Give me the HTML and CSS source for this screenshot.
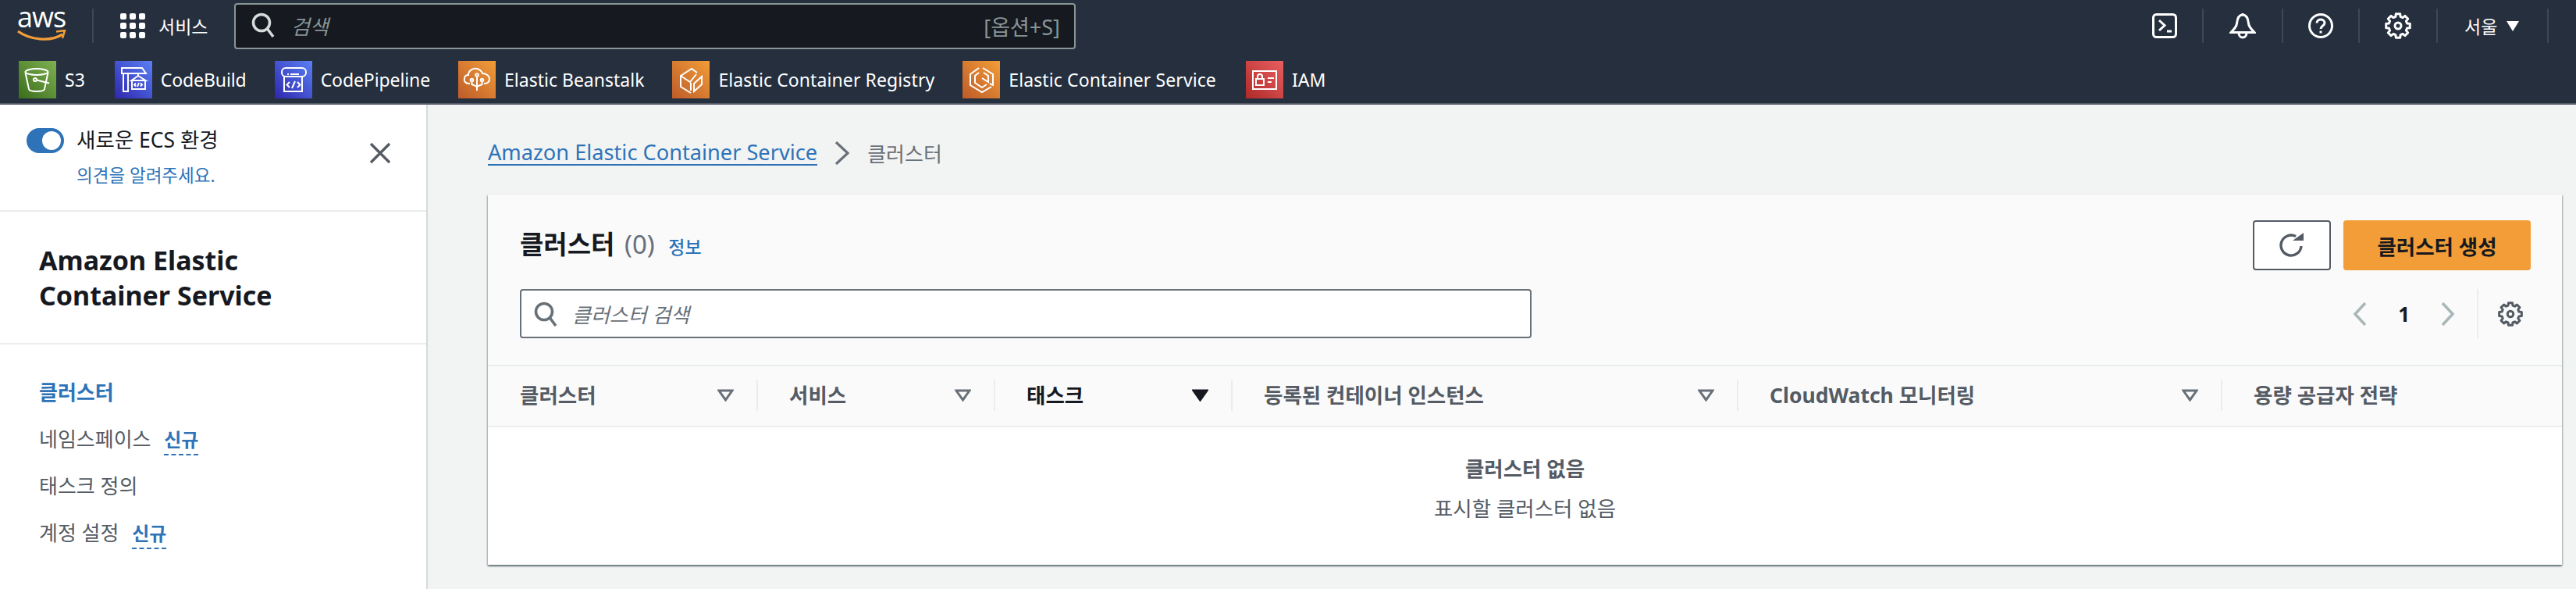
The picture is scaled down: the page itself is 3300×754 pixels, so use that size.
FILE: index.html
```html
<!DOCTYPE html>
<html lang="ko">
<head>
    <meta charset="UTF-8">
    <meta name="viewport" content="width=device-width, initial-scale=1.0">
    <title>클러스터 | Amazon Elastic Container Service</title>
    <link rel="stylesheet" href="styles.css">
</head>
<body>

    <header class="top_nav">
        <div class="nav_row">
            <a class="aws_logo">
                <span class="aws_text">aws</span>
                <svg class="aws_smile" width="64" height="16" viewBox="0 0 64 16" fill="none">
                    <path d="M1 2 C16 13 42 16 58 6" stroke="#f29d38" stroke-width="3.4"/>
                    <path d="M50 2.5 L61 1 L58 11" stroke="#f29d38" stroke-width="2.6"/>
                </svg>
            </a>
            <span class="nav_divider"></span>
            <a class="services_btn">
                <svg width="32" height="32" viewBox="0 0 32 32" fill="#fff">
                    <rect x="0" y="0" width="8" height="8" rx="2"/><rect x="12" y="0" width="8" height="8" rx="2"/><rect x="24" y="0" width="8" height="8" rx="2"/>
                    <rect x="0" y="12" width="8" height="8" rx="2"/><rect x="12" y="12" width="8" height="8" rx="2"/><rect x="24" y="12" width="8" height="8" rx="2"/>
                    <rect x="0" y="24" width="8" height="8" rx="2"/><rect x="12" y="24" width="8" height="8" rx="2"/><rect x="24" y="24" width="8" height="8" rx="2"/>
                </svg>
                <span>서비스</span>
            </a>
            <div class="nav_search">
                <svg width="30" height="34" viewBox="0 0 30 34" fill="none" stroke="#d5dbdb" stroke-width="3.6">
                    <circle cx="13" cy="13" r="10.5"/>
                    <path d="M20.5 21 L28 31"/>
                </svg>
                <span class="nav_search_text">검색</span>
                <span class="nav_search_key">[옵션+S]</span>
            </div>
            <div class="nav_tools">
                <span class="tool tool_first">
                    <svg width="32" height="32" viewBox="0 0 32 32" fill="none" stroke="#fff" stroke-width="3">
                        <rect x="1.5" y="1.5" width="29" height="29" rx="4"/>
                        <path d="M9 9 L16 15.5 L9 22"/>
                        <path d="M19 23 H25"/>
                    </svg>
                </span>
                <span class="tool tool_bell">
                    <svg width="34" height="34" viewBox="0 0 34 34" fill="none" stroke="#fff" stroke-width="3">
                        <path d="M17 3 C11 3 10 9 9.5 14 C9 19 5 22 2 25.5 H32 C29 22 25 19 24.5 14 C24 9 23 3 17 3 Z"/>
                        <path d="M12 26 C12 34 22 34 22 26"/>
                        <path d="M17 1 V3"/>
                    </svg>
                </span>
                <span class="tool tool_help">
                    <svg width="32" height="32" viewBox="0 0 32 32" fill="none" stroke="#fff" stroke-width="3">
                        <circle cx="16" cy="16" r="14.5"/>
                        <path d="M11 12.5 C11 6.5 21 6.5 21 12.5 C21 16 16 16 16 20"/>
                        <path d="M16 22.5 V25.5"/>
                    </svg>
                </span>
                <span class="tool">
                    <svg width="34" height="34" viewBox="0 0 34 34" fill="none" stroke="#fff" stroke-width="3" stroke-linejoin="round">
                        <polygon points="19.69,1.74 20.11,5.41 23,6.61 25.89,4.3 29.7,8.11 27.39,11 28.59,13.89 32.26,14.31 32.26,19.69 28.59,20.11 27.39,23 29.7,25.89 25.89,29.7 23,27.39 20.11,28.59 19.69,32.26 14.31,32.26 13.89,28.59 11,27.39 8.11,29.7 4.3,25.89 6.61,23 5.41,20.11 1.74,19.69 1.74,14.31 5.41,13.89 6.61,11 4.3,8.11 8.11,4.3 11,6.61 13.89,5.41 14.31,1.74"/>
                        <circle cx="17" cy="17" r="4"/>
                    </svg>
                </span>
                <span class="tool tool_region">서울 <i class="region_caret"></i></span>
                <span class="tool tool_last"></span>
            </div>
        </div>

        <div class="fav_row">
            <a class="fav fav_s3">
                <svg class="fav_icon" width="48" height="48" viewBox="0 0 48 48" fill="none" stroke="#fff" stroke-width="2">
                    <defs>
                        <linearGradient id="gradGreen" x1="0" y1="1" x2="1" y2="0"><stop offset="0" stop-color="#3a6e1a"/><stop offset="1" stop-color="#7fb052"/></linearGradient>
                        <linearGradient id="gradBlue" x1="0" y1="1" x2="1" y2="0"><stop offset="0" stop-color="#2e27ad"/><stop offset="1" stop-color="#5a80f5"/></linearGradient>
                        <linearGradient id="gradOrange" x1="0" y1="1" x2="1" y2="0"><stop offset="0" stop-color="#bd5b2a"/><stop offset="1" stop-color="#f29d38"/></linearGradient>
                        <linearGradient id="gradRed" x1="0" y1="1" x2="1" y2="0"><stop offset="0" stop-color="#b02a2a"/><stop offset="1" stop-color="#e85f5f"/></linearGradient>
                    </defs>
                    <rect width="48" height="48" fill="url(#gradGreen)" stroke="none"/>
                    <ellipse cx="23" cy="14" rx="14.5" ry="4"/>
                    <path d="M8.5 15 L13 36 C14 40 32 40 33 36 L37.5 15"/>
                    <circle cx="21" cy="24" r="2"/>
                    <path d="M23 24.5 L39 28.5"/>
                </svg>
                <span>S3</span>
            </a>
            <a class="fav fav_build">
                <svg class="fav_icon" width="48" height="48" viewBox="0 0 48 48" fill="none" stroke="#fff" stroke-width="2">
                    <rect width="48" height="48" fill="url(#gradBlue)" stroke="none"/>
                    <path d="M9 9 H35 L40 16 H9 Z"/>
                    <path d="M11 16 V39 H17 V16"/>
                    <path d="M30 16 V19 L21.5 25 H39.5 L30 19"/>
                    <rect x="22" y="25" width="17" height="11"/>
                    <path d="M27 28.5 L25 30.5 L27 32.5 M33 28.5 L35 30.5 L33 32.5 M31 28 L29 33"/>
                </svg>
                <span>CodeBuild</span>
            </a>
            <a class="fav fav_pipe">
                <svg class="fav_icon" width="48" height="48" viewBox="0 0 48 48" fill="none" stroke="#fff" stroke-width="2">
                    <rect width="48" height="48" fill="url(#gradBlue)" stroke="none"/>
                    <rect x="9" y="9" width="31" height="11" rx="5"/>
                    <path d="M12 20 V39 H35 V20"/>
                    <path d="M16 17 H18 M20 17 H31"/>
                    <path d="M19 27 L15.5 30.5 L19 34 M29 27 L32.5 30.5 L29 34 M26 26 L22 35"/>
                </svg>
                <span>CodePipeline</span>
            </a>
            <a class="fav fav_eb">
                <svg class="fav_icon" width="48" height="48" viewBox="0 0 48 48" fill="none" stroke="#fff" stroke-width="2">
                    <rect width="48" height="48" fill="url(#gradOrange)" stroke="none"/>
                    <path d="M15 29 C9 29 7 26 8 22 C8.5 19 11 18 13 18 C13 12 19 9 24 10 C28 11 30 13 31 16 C36 16 40 19 40 23 C40 27 37 29 33 29"/>
                    <path d="M24 20 V38"/>
                    <circle cx="24" cy="18" r="1.8"/>
                    <circle cx="17.5" cy="24.5" r="1.8"/>
                    <circle cx="30.5" cy="24.5" r="1.8"/>
                    <path d="M17.5 26.5 V30 L24 33 L30.5 30 V26.5"/>
                </svg>
                <span>Elastic Beanstalk</span>
            </a>
            <a class="fav fav_ecr">
                <svg class="fav_icon" width="48" height="48" viewBox="0 0 48 48" fill="none" stroke="#fff" stroke-width="2">
                    <rect width="48" height="48" fill="url(#gradOrange)" stroke="none"/>
                    <path d="M32 15 L25 10 L11 19 V33 L24 41"/>
                    <path d="M11 19 L23 27 L31 17"/>
                    <path d="M28 29 L38 20 V30 L28 39 Z"/>
                    <path d="M24 28 V38"/>
                </svg>
                <span>Elastic Container Registry</span>
            </a>
            <a class="fav fav_ecs">
                <svg class="fav_icon" width="48" height="48" viewBox="0 0 48 48" fill="none" stroke="#fff" stroke-width="2">
                    <rect width="48" height="48" fill="url(#gradOrange)" stroke="none"/>
                    <path d="M21 9 L10 17 V31 L25 40 L37 33"/>
                    <path d="M26 9 L39 17 V31 L35 29"/>
                    <path d="M21 15 L16 19 V28 L25 34 L31 30"/>
                    <path d="M27 15 L33 19 V27 L25 22"/>
                </svg>
                <span>Elastic Container Service</span>
            </a>
            <a class="fav fav_iam">
                <svg class="fav_icon" width="48" height="48" viewBox="0 0 48 48" fill="none" stroke="#fff" stroke-width="2">
                    <rect width="48" height="48" fill="url(#gradRed)" stroke="none"/>
                    <rect x="9" y="13" width="30" height="23"/>
                    <rect x="13" y="23" width="10" height="8"/>
                    <path d="M15 23 V20 C15 16 21 16 21 20 V23"/>
                    <path d="M28 22 H36 M28 27 H33"/>
                </svg>
                <span>IAM</span>
            </a>
        </div>
    </header>

    <div class="app_body">
        <aside class="side_nav">
            <div class="side_switch">
                <span class="toggle"><i class="toggle_knob"></i></span>
                <div class="side_switch_text">
                    <div class="switch_label">새로운 ECS 환경</div>
                    <a class="switch_link">의견을 알려주세요.</a>
                </div>
                <svg class="side_close" width="28" height="28" viewBox="0 0 28 28" fill="none" stroke="#545b64" stroke-width="3.4">
                    <path d="M2 2 L26 26 M26 2 L2 26"/>
                </svg>
            </div>
            <h2 class="side_title">Amazon Elastic<br>Container Service</h2>
            <ul class="side_links">
                <li class="active">클러스터</li>
                <li>네임스페이스 <a class="new_badge new_first">신규</a></li>
                <li>태스크 정의</li>
                <li>계정 설정 <a class="new_badge">신규</a></li>
            </ul>
        </aside>

        <main class="content">
            <nav class="breadcrumb">
                <a class="crumb_link">Amazon Elastic Container Service</a>
                <svg width="20" height="30" viewBox="0 0 20 30" fill="none" stroke="#687078" stroke-width="3.2">
                    <path d="M2 1 L17 15 L2 29"/>
                </svg>
                <span class="crumb_current">클러스터</span>
            </nav>

            <section class="card">
                <div class="card_head">
                    <div class="head_row">
                        <h1 class="card_title">클러스터 <span class="card_count">(0)</span> <a class="info_link">정보</a></h1>
                        <div class="head_actions">
                            <button class="btn_refresh">
                                <svg width="32" height="32" viewBox="0 0 32 32" fill="none" stroke="#545b64" stroke-width="3.4">
                                    <path d="M28 17 A13 13 0 1 1 21 4.5"/>
                                    <path d="M17 10 H31 V0" stroke="none" fill="#545b64"/>
                                </svg>
                            </button>
                            <button class="btn_create">클러스터 생성</button>
                        </div>
                    </div>
                    <div class="filter_row">
                        <div class="filter_input">
                            <svg width="30" height="32" viewBox="0 0 30 32" fill="none" stroke="#687078" stroke-width="3.6">
                                <circle cx="13" cy="13" r="10.5"/>
                                <path d="M20.5 21 L28 31"/>
                            </svg>
                            <span>클러스터 검색</span>
                        </div>
                        <div class="pager">
                            <svg width="18" height="30" viewBox="0 0 18 30" fill="none" stroke="#aab7b8" stroke-width="3.6"><path d="M16 1 L3 15 L16 29"/></svg>
                            <span class="page_num">1</span>
                            <svg width="18" height="30" viewBox="0 0 18 30" fill="none" stroke="#aab7b8" stroke-width="3.6"><path d="M2 1 L15 15 L2 29"/></svg>
                            <span class="pager_divider"></span>
                            <svg width="32" height="32" viewBox="0 0 34 34" fill="none" stroke="#545b64" stroke-width="3.2" stroke-linejoin="round">
                                <polygon points="19.69,1.74 20.11,5.41 23,6.61 25.89,4.3 29.7,8.11 27.39,11 28.59,13.89 32.26,14.31 32.26,19.69 28.59,20.11 27.39,23 29.7,25.89 25.89,29.7 23,27.39 20.11,28.59 19.69,32.26 14.31,32.26 13.89,28.59 11,27.39 8.11,29.7 4.3,25.89 6.61,23 5.41,20.11 1.74,19.69 1.74,14.31 5.41,13.89 6.61,11 4.3,8.11 8.11,4.3 11,6.61 13.89,5.41 14.31,1.74"/>
                                <circle cx="17" cy="17" r="4"/>
                            </svg>
                        </div>
                    </div>
                </div>

                <div class="table_head">
                    <div class="th col_name"><span class="th_label">클러스터</span>
                        <svg class="sort" width="21" height="16" viewBox="0 0 21 16" fill="none" stroke="#687078" stroke-width="3"><path d="M2 2 H19 L10.5 14 Z"/></svg>
                    </div>
                    <div class="th col_service"><span class="th_label">서비스</span>
                        <svg class="sort" width="21" height="16" viewBox="0 0 21 16" fill="none" stroke="#687078" stroke-width="3"><path d="M2 2 H19 L10.5 14 Z"/></svg>
                    </div>
                    <div class="th col_task sorted"><span class="th_label">태스크</span>
                        <svg class="sort" width="21" height="16" viewBox="0 0 21 16" fill="#16191f" stroke="#16191f" stroke-width="3"><path d="M2 2 H19 L10.5 14 Z"/></svg>
                    </div>
                    <div class="th col_instance"><span class="th_label">등록된 컨테이너 인스턴스</span>
                        <svg class="sort" width="21" height="16" viewBox="0 0 21 16" fill="none" stroke="#687078" stroke-width="3"><path d="M2 2 H19 L10.5 14 Z"/></svg>
                    </div>
                    <div class="th col_watch"><span class="th_label">CloudWatch 모니터링</span>
                        <svg class="sort" width="21" height="16" viewBox="0 0 21 16" fill="none" stroke="#687078" stroke-width="3"><path d="M2 2 H19 L10.5 14 Z"/></svg>
                    </div>
                    <div class="th col_strategy"><span class="th_label">용량 공급자 전략</span></div>
                </div>

                <div class="empty_state">
                    <div class="empty_title">클러스터 없음</div>
                    <div class="empty_text">표시할 클러스터 없음</div>
                </div>
            </section>
        </main>
    </div>

</body>
</html>
```

FILE: styles.css
```css
* {
    box-sizing: border-box;
}

html,
body {
    height: 100%;
    overflow: hidden;
}

body {
    margin: 0;
    background-color: #f2f3f3;
    color: #16191f;
    font-family: "Noto Sans", "Noto Sans CJK KR", sans-serif;
    font-size: 26px;
    display: flex;
    flex-direction: column;
}

a {
    text-decoration: none;
}

/* top nav */
.top_nav {
    background-color: #252f3e;
    color: #fff;
    height: 134px;
    border-bottom: 2px solid #545b64;
    flex: none;
}

.nav_row {
    height: 66px;
    display: flex;
    align-items: center;
}

.aws_logo {
    width: 118px;
    height: 66px;
    padding: 5px 0 0 22px;
    display: flex;
    flex-direction: column;
}

.aws_text {
    font-family: "Open Sans", sans-serif;
    font-size: 36px;
    line-height: 34px;
    letter-spacing: -1px;
}

.aws_smile {
    margin-top: -1px;
}

.nav_divider {
    width: 2px;
    height: 44px;
    background-color: #414750;
}

.services_btn {
    display: flex;
    align-items: center;
    gap: 17px;
    margin-left: 34px;
    width: 146px;
    font-size: 23px;
}

.nav_search {
    width: 1078px;
    height: 59px;
    background-color: #16191f;
    border: 2px solid #879596;
    border-radius: 4px;
    display: flex;
    align-items: center;
    padding: 0 18px 0 20px;
}

.nav_search_text {
    margin-left: 21px;
    font-style: italic;
    color: #879596;
}

.nav_search_key {
    margin-left: auto;
    font-size: 27px;
    color: #879596;
}

.nav_tools {
    margin-left: auto;
    display: flex;
    align-items: center;
    height: 44px;
}

.tool {
    height: 44px;
    width: 100px;
    border-left: 2px solid #414750;
    display: flex;
    align-items: center;
    justify-content: center;
}

.tool_first {
    border-left: none;
    width: 64px;
    justify-content: flex-start;
}

.tool_bell {
    width: 102px;
}

.tool_help {
    width: 98px;
}

.tool_region {
    width: 142px;
    justify-content: flex-start;
    padding-left: 34px;
    gap: 12px;
    font-size: 23px;
}

.tool_last {
    width: 37px;
}

.region_caret {
    width: 0;
    height: 0;
    border-left: 8px solid transparent;
    border-right: 8px solid transparent;
    border-top: 13px solid #fff;
}

.fav_row {
    height: 66px;
    display: flex;
    align-items: center;
    padding: 6px 0 0 24px;
    font-size: 23px;
}

.fav {
    display: flex;
    align-items: center;
    gap: 11px;
    margin-right: 36px;
    color: #fff;
    white-space: nowrap;
}

.fav_s3,
.fav_ecs {
    margin-right: 38px;
}

.fav_build,
.fav_pipe {
    letter-spacing: -.1px;
}

.fav_ecr,
.fav_ecs {
    letter-spacing: .1px;
}

.fav_icon {
    flex: none;
}

/* app layout */
.app_body {
    flex: 1;
    display: flex;
    min-height: 0;
}

/* side nav */
.side_nav {
    width: 548px;
    flex: none;
    background-color: #fff;
    border-right: 2px solid #d5dbdb;
}

.side_switch {
    height: 137px;
    padding: 30px 45px 0 34px;
    border-bottom: 2px solid #eaeded;
    display: flex;
    align-items: flex-start;
}

.toggle {
    width: 48px;
    height: 32px;
    border-radius: 16px;
    background-color: #2e73b8;
    display: flex;
    align-items: center;
    justify-content: flex-end;
    padding-right: 4px;
}

.toggle_knob {
    width: 24px;
    height: 24px;
    border-radius: 50%;
    background-color: #fff;
}

.side_switch_text {
    margin-left: 16px;
}

.switch_label {
    font-size: 26.5px;
    line-height: 34px;
    margin-top: -2px;
}

.switch_link {
    display: block;
    margin-top: 14px;
    font-size: 22.5px;
    line-height: 30px;
    color: #2e73b8;
}

.side_close {
    margin-left: auto;
    margin-top: 18px;
}

.side_title {
    margin: 0;
    height: 170px;
    padding: 40px 0 0 50px;
    font-size: 34px;
    line-height: 45px;
    font-weight: 700;
    border-bottom: 2px solid #eaeded;
}

.side_links {
    list-style: none;
    margin: 0;
    padding: 31px 0 0 50px;
    color: #545b64;
}

.side_links li {
    height: 60px;
    line-height: 60px;
}

.side_links .active {
    color: #2e73b8;
    font-weight: 700;
}

.new_badge {
    margin-left: 10px;
    font-size: 24px;
    font-weight: 700;
    color: #2e73b8;
    border-bottom: 2px dashed #2e73b8;
    padding-bottom: 2px;
}

/* main content */
.content {
    flex: 1;
    padding: 0 18px 0 77px;
    min-width: 0;
}

.breadcrumb {
    margin-top: 46px;
    height: 32px;
    display: flex;
    align-items: center;
    gap: 22px;
}

.crumb_link {
    color: #2e73b8;
    border-bottom: 2px solid #2e73b8;
    font-size: 27.2px;
    line-height: 30px;
}

.crumb_current {
    color: #687078;
}

.card {
    margin-top: 37px;
    height: 474px;
    background-color: #fff;
    box-shadow: 0 2px 2px rgba(0, 28, 36, .45), 1px 1px 2px rgba(0, 28, 36, .2), -1px 1px 2px rgba(0, 28, 36, .2);
    display: flex;
    flex-direction: column;
}

.card_head {
    background-color: #fafafa;
    height: 220px;
    padding: 33px 40px 0 41px;
    border-bottom: 2px solid #eaeded;
}

.head_row {
    display: flex;
    align-items: center;
    justify-content: space-between;
    height: 64px;
}

.card_title {
    margin: 0 0 6px;
    font-size: 33px;
    font-weight: 700;
}

.card_count {
    font-weight: 400;
    color: #687078;
    margin-left: 4px;
}

.info_link {
    margin-left: 9px;
    font-size: 23px;
    font-weight: 500;
    color: #2e73b8;
}

.head_actions {
    display: flex;
    gap: 16px;
}

.btn_refresh {
    width: 100px;
    height: 64px;
    background-color: #fff;
    border: 2px solid #545b64;
    border-radius: 4px;
    display: flex;
    align-items: center;
    justify-content: center;
    padding: 0;
}

.btn_create {
    width: 240px;
    height: 64px;
    background-color: #f29d38;
    border: none;
    border-radius: 4px;
    color: #16191f;
    font-family: inherit;
    font-size: 26.5px;
    font-weight: 700;
    padding: 0;
}

.filter_row {
    margin-top: 24px;
    display: flex;
    align-items: center;
    justify-content: space-between;
}

.filter_input {
    width: 1296px;
    height: 63px;
    background-color: #fff;
    border: 2px solid #687078;
    border-radius: 4px;
    display: flex;
    align-items: center;
    gap: 19px;
    padding-left: 16px;
    color: #687078;
    font-style: italic;
}

.pager {
    display: flex;
    align-items: center;
    margin-right: 10px;
}

.page_num {
    font-weight: 700;
    margin: 0 40px;
}

.pager_divider {
    width: 2px;
    height: 63px;
    background-color: #eaeded;
    margin: 0 25px 0 28px;
}

/* table */
.table_head {
    background-color: #fafafa;
    height: 78px;
    padding-bottom: 2px;
    border-bottom: 2px solid #eaeded;
    display: flex;
    align-items: center;
    font-size: 26.5px;
}

.th {
    height: 40px;
    padding: 0 29px 0 40px;
    border-right: 2px solid #eaeded;
    display: flex;
    align-items: center;
    justify-content: space-between;
    font-weight: 700;
    color: #545b64;
    white-space: nowrap;
}

.th_label {
    margin-bottom: 3px;
}

.col_name {
    width: 346px;
    padding-left: 41px;
}

.col_service,
.col_task {
    width: 304px;
}

.col_instance {
    width: 648px;
}

.col_watch {
    width: 620px;
}

.col_strategy {
    border-right: none;
}

.sorted {
    color: #16191f;
}

.empty_state {
    flex: 1;
    background-color: #fff;
    text-align: center;
    padding-top: 30px;
    color: #545b64;
    font-size: 26.5px;
}

.empty_title {
    font-weight: 700;
    line-height: 46px;
}

.empty_text {
    margin-top: 5px;
    line-height: 46px;
}
```
